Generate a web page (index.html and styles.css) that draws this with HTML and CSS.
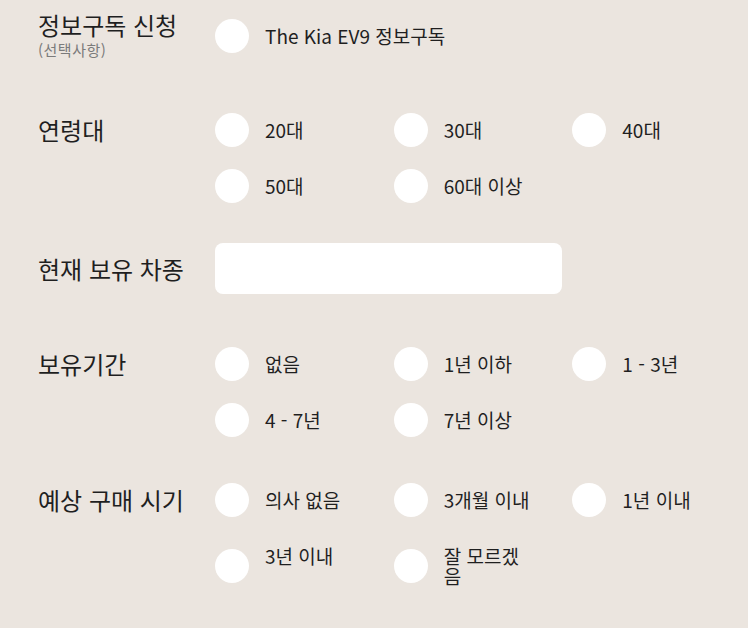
FILE: index.html
```html
<!DOCTYPE html>
<html lang="ko">
<head>
    <meta charset="UTF-8">
    <meta name="viewport" content="width=device-width, initial-scale=1.0">
    <title>The Kia EV9 설문</title>
    <link rel="stylesheet" href="styles.css">
</head>
<body>
    <form class="survey">
        <!-- 정보구독 -->
        <div class="field field--center">
            <div class="field-title field-title--sub">
                <h2>정보구독 신청</h2>
                <p class="field-note">(선택사항)</p>
            </div>
            <div class="options options--single">
                <label class="option"><input type="radio" name="subscribe"><span class="option-text">The Kia EV9 정보구독</span></label>
            </div>
        </div>

        <!-- 연령대 -->
        <div class="field">
            <div class="field-title"><h2>연령대</h2></div>
            <div class="options">
                <label class="option"><input type="radio" name="age"><span class="option-text">20대</span></label>
                <label class="option"><input type="radio" name="age"><span class="option-text">30대</span></label>
                <label class="option"><input type="radio" name="age"><span class="option-text">40대</span></label>
                <label class="option"><input type="radio" name="age"><span class="option-text">50대</span></label>
                <label class="option"><input type="radio" name="age"><span class="option-text">60대 이상</span></label>
            </div>
        </div>

        <!-- 현재 보유 차종 -->
        <div class="field field--center field--input">
            <div class="field-title"><h2><label for="current-car">현재 보유 차종</label></h2></div>
            <input type="text" id="current-car" class="text-input">
        </div>

        <!-- 보유기간 -->
        <div class="field">
            <div class="field-title"><h2>보유기간</h2></div>
            <div class="options">
                <label class="option"><input type="radio" name="period"><span class="option-text">없음</span></label>
                <label class="option"><input type="radio" name="period"><span class="option-text">1년 이하</span></label>
                <label class="option"><input type="radio" name="period"><span class="option-text">1 - 3년</span></label>
                <label class="option"><input type="radio" name="period"><span class="option-text">4 - 7년</span></label>
                <label class="option"><input type="radio" name="period"><span class="option-text">7년 이상</span></label>
            </div>
        </div>

        <!-- 예상 구매 시기 -->
        <div class="field field--last">
            <div class="field-title"><h2>예상 구매 시기</h2></div>
            <div class="options">
                <label class="option"><input type="radio" name="plan"><span class="option-text">의사 없음</span></label>
                <label class="option"><input type="radio" name="plan"><span class="option-text">3개월 이내</span></label>
                <label class="option"><input type="radio" name="plan"><span class="option-text">1년 이내</span></label>
                <label class="option"><input type="radio" name="plan"><span class="option-text">3년 이내</span></label>
                <label class="option"><input type="radio" name="plan"><span class="option-text">잘 모르겠음</span></label>
            </div>
        </div>
    </form>
</body>
</html>
```

FILE: styles.css
```css
/* Base Reset */
* {
    margin: 0;
    padding: 0;
    box-sizing: border-box;
}

body {
    font-family: "Noto Sans CJK KR", "Noto Sans", sans-serif;
    background-color: #ebe5df;
    color: #1f1f1f;
}

.survey {
    padding: 12px 38px 0;
}

/* Field Rows */
.field {
    display: flex;
    align-items: flex-start;
    margin-top: 53px;
}

.field:first-child {
    margin-top: 0;
}

.field--center {
    align-items: center;
}

.field--input {
    margin-top: 40px;
}

.field--last {
    margin-top: 46px;
}

.field-title {
    width: 177px;
    flex-shrink: 0;
}

.field-title h2 {
    font-size: 24px;
    font-weight: 400;
    line-height: 34px;
}

.field-title--sub h2 {
    line-height: 26px;
}

.field-note {
    margin-top: 2px;
    font-size: 15px;
    letter-spacing: 0.5px;
    line-height: 20px;
    color: #7b7b7b;
}

/* Radio Options */
.options {
    display: grid;
    grid-template-columns: repeat(3, 1fr);
    row-gap: 22px;
    width: 536px;
    flex-shrink: 0;
}

.options--single {
    grid-template-columns: 1fr;
}

.option {
    display: flex;
    align-items: center;
    gap: 16px;
    cursor: pointer;
}

.option input[type="radio"] {
    appearance: none;
    -webkit-appearance: none;
    width: 34px;
    height: 34px;
    flex-shrink: 0;
    border-radius: 50%;
    background-color: #fff;
    cursor: pointer;
}

.option input[type="radio"]:checked {
    box-shadow: inset 0 0 0 10px #05141f;
}

.option-text {
    align-self: flex-start;
    max-width: 92px;
    padding: 7px 0;
    font-size: 19px;
    line-height: 20px;
}

.options--single .option-text {
    max-width: none;
}

/* Text Input */
.text-input {
    width: 347px;
    height: 51px;
    padding: 0 16px;
    border: none;
    border-radius: 8px;
    background-color: #fff;
    font-family: inherit;
    font-size: 17px;
    color: #1f1f1f;
}
```
